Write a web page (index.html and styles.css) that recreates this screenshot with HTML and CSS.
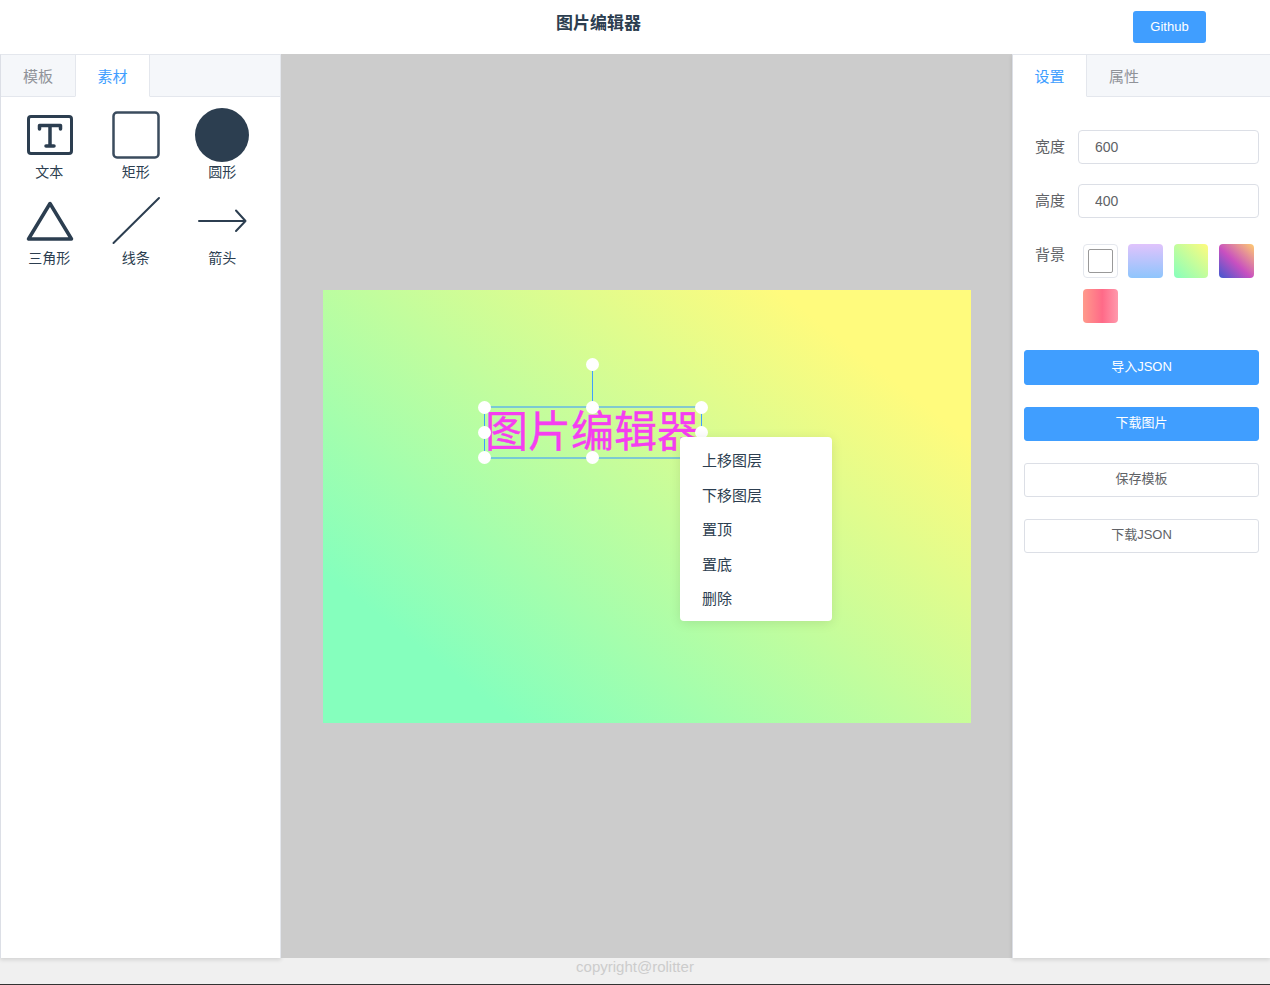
FILE: index.html
```html
<!DOCTYPE html>
<html lang="zh-CN">
<head>
  <meta charset="UTF-8">
  <meta name="viewport" content="width=device-width, initial-scale=1.0">
  <title>图片编辑器</title>
  <link rel="stylesheet" href="styles.css">
</head>
<body>

<header class="topbar">
  <h1 class="topbar-title">图片编辑器</h1>
  <a class="github-btn">Github</a>
</header>

<main class="layout">
  <aside class="panel panel-left">
    <div class="tabs">
      <div class="tab">模板</div>
      <div class="tab tab-active tab-bordered">素材</div>
    </div>
    <div class="shapes">
      <div class="shape">
        <svg class="shape-icon" viewBox="0 0 54 54">
          <rect x="6.500" y="8.500" width="43" height="37" rx="2.500" class="line-3"/>
          <path d="M17.500 21v-3.500h21V21M28 17.500v20.500M24 38h8" class="line-t"/>
        </svg>
        <span>文本</span>
      </div>
      <div class="shape">
        <svg class="shape-icon" viewBox="0 0 54 54">
          <rect x="4.500" y="4.500" width="45" height="45" rx="3.500" class="line-3 line-soft"/>
        </svg>
        <span>矩形</span>
      </div>
      <div class="shape">
        <svg class="shape-icon" viewBox="0 0 54 54">
          <circle cx="27" cy="27" r="27" fill="#2c3e50"/>
        </svg>
        <span>圆形</span>
      </div>
      <div class="shape">
        <svg class="shape-icon" viewBox="0 0 54 54">
          <path d="M28 9.500L6.500 45H49.500Z" class="line-t"/>
        </svg>
        <span>三角形</span>
      </div>
      <div class="shape">
        <svg class="shape-icon" viewBox="0 0 54 54">
          <path d="M4.500 49L50 4" class="line-2"/>
        </svg>
        <span>线条</span>
      </div>
      <div class="shape">
        <svg class="shape-icon" viewBox="0 0 54 54">
          <path d="M4 27H50.500M41 16.500L50.500 27L41 37" class="line-2"/>
        </svg>
        <span>箭头</span>
      </div>
    </div>
  </aside>

  <section class="workspace">
    <div class="canvas">
      <div class="rotate-line"></div>
      <div class="selection">
        <span class="canvas-text">图片编辑器</span>
      </div>
      <i class="handle h-rotate"></i>
      <i class="handle h-tl"></i>
      <i class="handle h-tc"></i>
      <i class="handle h-tr"></i>
      <i class="handle h-ml"></i>
      <i class="handle h-mr"></i>
      <i class="handle h-bl"></i>
      <i class="handle h-bc"></i>
      <ul class="context-menu">
        <li>上移图层</li>
        <li>下移图层</li>
        <li>置顶</li>
        <li>置底</li>
        <li>删除</li>
      </ul>
    </div>
  </section>

  <aside class="panel panel-right">
    <div class="tabs">
      <div class="tab tab-active tab-right-border">设置</div>
      <div class="tab">属性</div>
    </div>
    <form class="settings">
      <div class="form-row">
        <label>宽度</label>
        <input class="field" type="text" value="600">
      </div>
      <div class="form-row">
        <label>高度</label>
        <input class="field" type="text" value="400">
      </div>
      <div class="form-row form-row-bg">
        <label>背景</label>
        <div class="swatches">
          <div class="swatch swatch-none"><div></div></div>
          <div class="swatch swatch-blue"></div>
          <div class="swatch swatch-green"></div>
          <div class="swatch swatch-purple"></div>
          <div class="swatch swatch-pink"></div>
        </div>
      </div>
      <button type="button" class="btn btn-primary btn-tall">导入JSON</button>
      <button type="button" class="btn btn-primary">下载图片</button>
      <button type="button" class="btn">保存模板</button>
      <button type="button" class="btn">下载JSON</button>
    </form>
  </aside>
</main>

<footer class="footer">copyright@rolitter</footer>

</body>
</html>
```

FILE: styles.css
```css
* {
  box-sizing: border-box;
}

body {
  margin: 0;
  height: 985px;
  overflow: hidden;
  display: flex;
  flex-direction: column;
  background: #f0f0f0;
  color: #2c3e50;
  font-family: "Liberation Sans", "Noto Sans CJK SC", sans-serif;
}

.topbar {
  height: 54px;
  flex: none;
  background: #fff;
  position: relative;
  display: flex;
  align-items: flex-start;
  justify-content: flex-end;
  padding: 11px 64px 0 0;
}

.topbar-title {
  position: absolute;
  left: 556px;
  top: 11px;
  margin: 0;
  font-size: 17px;
  line-height: 25px;
  font-weight: bold;
}

.github-btn {
  width: 73px;
  height: 32px;
  background: #409eff;
  border-radius: 3px;
  color: #fff;
  font-size: 13px;
  line-height: 32px;
  text-align: center;
}

.layout {
  flex: 1;
  display: flex;
  min-height: 0;
  height: 904px;
}

.panel {
  background: #fff;
  border-top: 1px solid #e4e7ed;
  box-shadow: 0 2px 4px rgba(0, 0, 0, 0.12);
  flex: none;
}

.panel-left {
  width: 281px;
  border-left: 1px solid #dcdfe6;
  border-right: 1px solid #e4e7ed;
}

.panel-right {
  width: 258px;
  border-left: 1px solid #dcdfe6;
}

.tabs {
  display: flex;
  height: 42px;
  background: #f5f7fa;
  border-bottom: 1px solid #e4e7ed;
}

.tab {
  width: 74px;
  height: 42px;
  font-size: 15px;
  line-height: 44px;
  text-align: center;
  color: #909399;
}

.tab-active {
  background: #fff;
  color: #409eff;
  border-bottom: 1px solid #fff;
}

.tab-bordered {
  width: 75px;
  border-left: 1px solid #e4e7ed;
  border-right: 1px solid #e4e7ed;
}

.tab-right-border {
  border-right: 1px solid #e4e7ed;
}

.shapes {
  display: grid;
  grid-template-columns: repeat(3, 86.500px);
  grid-auto-rows: 86px;
  padding: 11px 0 0 5px;
}

.shape {
  display: flex;
  flex-direction: column;
  align-items: center;
  font-size: 14px;
  line-height: 20px;
}

.shape-icon {
  width: 54px;
  height: 54px;
  display: block;
}

.line-3,
.line-2,
.line-t {
  fill: none;
  stroke: #2c3e50;
  stroke-linejoin: round;
  stroke-linecap: round;
}

.line-3 {
  stroke-width: 3;
}

.line-2 {
  stroke-width: 2;
}

.line-t {
  stroke-width: 3.500;
}

.line-soft {
  stroke: #3b4c5e;
  stroke-width: 2.500;
}

.workspace {
  flex: 1;
  background: #cccccc;
  display: flex;
  align-items: center;
  justify-content: center;
  padding-left: 1px;
  padding-top: 1px;
}

.canvas {
  position: relative;
  width: 648px;
  height: 433px;
  flex: none;
  background: linear-gradient(38deg, #85ffbd 16%, #fffb7d 84%);
}

.selection {
  position: absolute;
  left: 161px;
  top: 116px;
  width: 218px;
  height: 53px;
  border-style: solid;
  border-width: 2px 1px;
  border-color: rgba(64, 158, 255, 0.55) #409eff;
}

.canvas-text {
  position: absolute;
  left: 0;
  top: -3px;
  white-space: nowrap;
  font-size: 43px;
  line-height: 54px;
  color: #f53ef0;
  -webkit-text-stroke: 0.4px #f53ef0;
}

.rotate-line {
  position: absolute;
  left: 269px;
  top: 74px;
  width: 1px;
  height: 43px;
  background: #409eff;
}

.handle {
  position: absolute;
  width: 13px;
  height: 13px;
  margin: -6.500px 0 0 -6.500px;
  border-radius: 50%;
  background: #fff;
}

.h-rotate { left: 269.500px; top: 74px; }
.h-tl { left: 161px; top: 117px; }
.h-tc { left: 269.500px; top: 117px; }
.h-tr { left: 378px; top: 117px; }
.h-ml { left: 161px; top: 142px; }
.h-mr { left: 378px; top: 142px; }
.h-bl { left: 161px; top: 167px; }
.h-bc { left: 269.500px; top: 167px; }

.context-menu {
  position: absolute;
  left: 357px;
  top: 147px;
  width: 152px;
  height: 184px;
  margin: 0;
  padding: 7px 0 0;
  list-style: none;
  background: #fff;
  border-radius: 4px;
  box-shadow: 0 2px 12px rgba(0, 0, 0, 0.1);
  font-size: 15px;
}

.context-menu li {
  height: 34.500px;
  line-height: 34.500px;
  padding-left: 22px;
}

.settings {
  padding: 33px 11px 0 11px;
}

.form-row {
  display: flex;
  align-items: center;
  height: 34px;
  margin-bottom: 20px;
}

.form-row label {
  width: 54px;
  padding: 0 0 4px 11px;
  flex: none;
  font-size: 15px;
  color: #606266;
}

.form-row-bg {
  height: auto;
  align-items: flex-start;
  margin-top: 26px;
  margin-bottom: 27px;
}

.form-row-bg label {
  padding: 1px 0 0 11px;
  line-height: 20px;
}

.field {
  width: 181px;
  height: 34px;
  padding: 0 16px;
  border: 1px solid #dcdfe6;
  border-radius: 4px;
  font-family: inherit;
  font-size: 14px;
  color: #606266;
  outline: none;
}

.swatches {
  display: grid;
  grid-template-columns: repeat(4, 34.500px);
  grid-auto-rows: 34px;
  gap: 11px 10.900px;
  margin-left: 5px;
}

.swatch {
  border-radius: 4px;
}

.swatch-none {
  background: #fff;
  border: 1px solid #e4e7ed;
  padding: 4px;
}

.swatch-none div {
  height: 100%;
  border: 1px solid #999;
  border-radius: 2px;
}

.swatch-blue {
  background: linear-gradient(180deg, #e0c3fc 0%, #8ec5fc 100%);
}

.swatch-green {
  background: linear-gradient(45deg, #85ffbd 0%, #fffb7d 100%);
}

.swatch-purple {
  background: linear-gradient(43deg, #4158d0 0%, #c850c0 46%, #ffcc70 100%);
}

.swatch-pink {
  background: linear-gradient(90deg, #ff9a8b 0%, #ff6a88 55%, #ff99ac 100%);
}

.btn {
  display: block;
  width: 235px;
  height: 34px;
  margin-bottom: 22px;
  padding: 0 0 5px;
  background: #fff;
  border: 1px solid #dcdfe6;
  border-radius: 3px;
  font-family: inherit;
  font-size: 13px;
  color: #606266;
}

.btn-primary {
  background: #409eff;
  border-color: #409eff;
  color: #fff;
}

.btn-tall {
  height: 35px;
}

.footer {
  height: 27px;
  flex: none;
  border-bottom: 1px solid #333;
  text-align: center;
  color: #ccc;
  font-size: 15px;
  line-height: 18px;
}
```
